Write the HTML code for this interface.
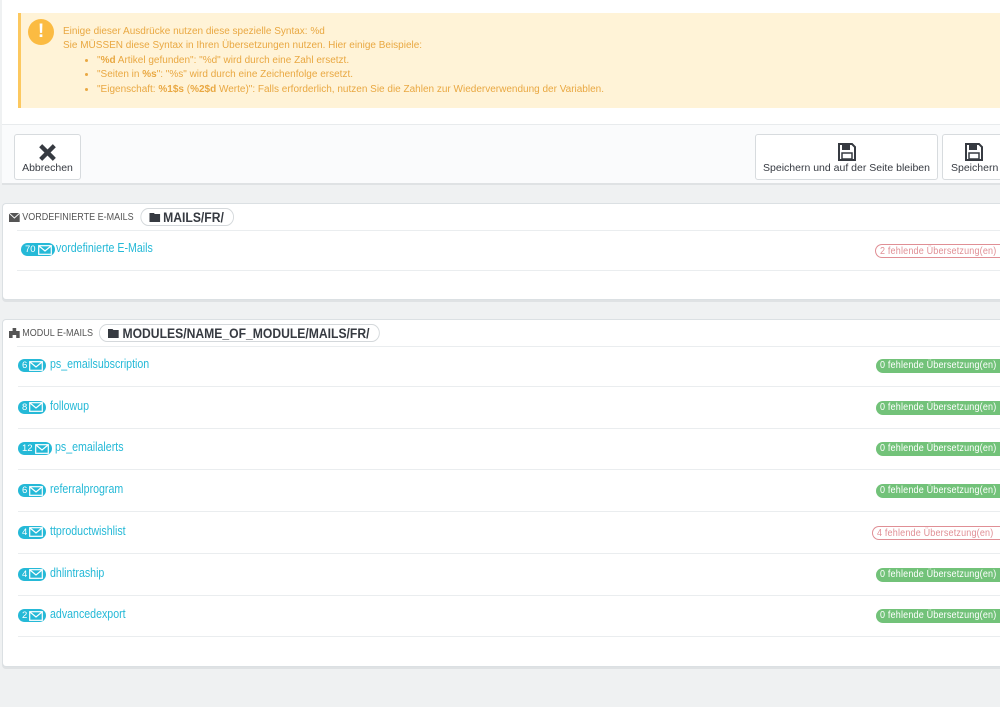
<!DOCTYPE html>
<html><head><meta charset="utf-8"><style>
*{margin:0;padding:0;box-sizing:border-box}
body{width:1000px;height:707px;background:#eff1f2;font-family:"Liberation Sans",sans-serif;position:relative;overflow:hidden}
.abs{position:absolute}
.top{left:2px;top:0;width:998px;height:124px;background:#fff}
.alert{left:18px;top:13px;width:982px;height:95px;background:#fff3d7;border-left:3px solid #fcc85f;color:#e9a842;font-size:10px;line-height:14.4px}
.alert .ic{position:absolute;left:7px;top:6px;width:26px;height:26px;border-radius:50%;background:#fbbb42;color:#fff;font-weight:bold;font-size:19px;text-align:center;line-height:26px}
.alert .tx{position:absolute;left:42px;top:12px}
.alert ul{margin-left:34px;list-style:disc}
.tool{left:2px;top:124px;width:998px;height:61px;background:#fafbfc;border-top:1px solid #e8ebed;border-bottom:2px solid #dfe2e4}
.btn{position:absolute;top:9px;height:46px;background:#fff;border:1px solid #d7dbde;border-radius:3px;color:#363a41;font-size:10.5px;text-align:center}
.btn .lb{position:absolute;bottom:5px;left:0;right:0}
.panel{left:2px;width:998px;background:#fff;border:1px solid #dbe0e3;border-right:none;border-radius:4px 0 0 4px;box-shadow:0 2px 0 #dfe2e4}
.ph{position:absolute;left:6px;top:3px;height:20px;font-size:10px;color:#555;display:flex;align-items:center;transform:scaleX(.9);transform-origin:left}
.path{margin-left:7px;border:1px solid #d4d8db;border-radius:10px;padding:0 10px 0 9px;height:18px;display:flex;align-items:center;font-weight:bold;font-size:13.5px;color:#363a41}
.hl{position:absolute;left:14px;right:0;height:1px;background:#eaedef}
.row{position:absolute;left:16px;width:984px;height:14px}
.bd{position:absolute;left:2px;top:0;height:13px;background:#25b9d7;border-radius:7px;color:#fff;font-size:9.5px;line-height:13px;padding-left:4px;display:flex;align-items:center}
.bd svg{margin-left:2px;margin-right:3px}
.lk{position:absolute;top:-2px;color:#25b9d7;font-size:12.5px;transform:scaleX(.85);transform-origin:left;white-space:nowrap}
.mis{position:absolute;right:0;top:0;height:14px;width:128px;border-radius:7px 0 0 7px;font-size:10.5px;line-height:13px;padding-left:4px;white-space:nowrap;letter-spacing:.2px}
.mis span{display:inline-block;transform:scaleX(.86);transform-origin:left}
.g{background:#72c279;color:#fff}
.r{border:1.5px solid #e08f95;border-right:none;color:#e08f95;background:#fff}
</style></head><body>
<div class="abs top"></div>
<div class="abs alert"><div class="ic">!</div><div class="tx">
Einige dieser Ausdrücke nutzen diese spezielle Syntax: %d<br>Sie MÜSSEN diese Syntax in Ihren Übersetzungen nutzen. Hier einige Beispiele:
<ul><li>"<b>%d</b> Artikel gefunden": "%d" wird durch eine Zahl ersetzt.</li><li>"Seiten in <b>%s</b>": "%s" wird durch eine Zeichenfolge ersetzt.</li><li>"Eigenschaft: <b>%1$s</b> (<b>%2$d</b> Werte)": Falls erforderlich, nutzen Sie die Zahlen zur Wiederverwendung der Variablen.</li></ul></div></div>
<div class="abs tool">
<div class="btn" style="left:12px;width:67px"><svg style="position:absolute;left:24px;top:9px" width="17" height="17" viewBox="0 0 16 16"><path d="M3 3L13 13M13 3L3 13" stroke="#363a41" stroke-width="4" stroke-linecap="square"/></svg><div class="lb">Abbrechen</div></div>
<div class="btn" style="left:753px;width:183px"><svg style="position:absolute;left:81px;top:7px" width="20" height="20" viewBox="0 0 20 20"><path d="M2 2H15L18 5V18H2Z" fill="none" stroke="#363a41" stroke-width="2"/><rect x="5" y="3" width="8" height="5" fill="#363a41"/><rect x="5" y="11" width="10" height="6" fill="none" stroke="#363a41" stroke-width="1.5"/></svg><div class="lb">Speichern und auf der Seite bleiben</div></div>
<div class="btn" style="left:940px;width:70px"><svg style="position:absolute;left:21px;top:7px" width="20" height="20" viewBox="0 0 20 20"><path d="M2 2H15L18 5V18H2Z" fill="none" stroke="#363a41" stroke-width="2"/><rect x="5" y="3" width="8" height="5" fill="#363a41"/><rect x="5" y="11" width="10" height="6" fill="none" stroke="#363a41" stroke-width="1.5"/></svg><div class="lb" style="text-align:left;padding-left:8px">Speichern</div></div>
</div>

<div class="abs panel" style="top:203px;height:97px">
<div class="ph"><svg width="12" height="9" viewBox="0 0 12 9"><rect width="12" height="9" fill="#555"/><path d="M0 0L6 5L12 0" stroke="#fff" fill="none"/></svg>&nbsp;VORDEFINIERTE E-MAILS<div class="path"><svg width="12" height="10" viewBox="0 0 12 10"><path d="M0 1H5L6 2H12V10H0Z" fill="#363a41"/></svg>&nbsp;MAILS/FR/</div></div>
<div class="hl" style="top:26px"></div>
<div class="row" style="top:39px"><div class="bd">70<svg width="14" height="10" viewBox="0 0 14 10"><rect x=".7" y=".7" width="12.6" height="8.6" fill="none" stroke="#fff" stroke-width="1.2"/><path d="M1 1L7 6L13 1" stroke="#fff" fill="none" stroke-width="1.2"/></svg></div><div class="lk" style="left:37px">vordefinierte E-Mails</div><div class="mis r" style="top:1px"><span>2 fehlende Übersetzung(en)</span></div></div>
<div class="hl" style="top:66px"></div>
</div>

<div class="abs panel" style="top:319px;height:348px">
<div class="ph"><svg width="12" height="10" viewBox="0 0 12 10"><path d="M4 0H8V3H12V10H8V7H4V10H0V3H4Z" fill="#555"/></svg>&nbsp;MODUL E-MAILS<div class="path"><svg width="12" height="10" viewBox="0 0 12 10"><path d="M0 1H5L6 2H12V10H0Z" fill="#363a41"/></svg>&nbsp;MODULES/NAME_OF_MODULE/MAILS/FR/</div></div>
<div class="hl" style="top:26px"></div>
</div>
<div id="rows"></div>
<script>
var d=[["6","ps_emailsubscription",0],["8","followup",0],["12","ps_emailalerts",0],["6","referralprogram",0],["4","ttproductwishlist",4],["4","dhlintraship",0],["2","advancedexport",0]];
var h="";d.forEach(function(r,i){var y=359+i*41.7;var w=r[0].length>1?36:31;
h+='<div class="row" style="position:absolute;top:'+y+'px"><div class="bd">'+r[0]+'<svg width="14" height="10" viewBox="0 0 14 10"><rect x=".7" y=".7" width="12.6" height="8.6" fill="none" stroke="#fff" stroke-width="1.2"/><path d="M1 1L7 6L13 1" stroke="#fff" fill="none" stroke-width="1.2"/></svg></div><div class="lk" style="left:'+(w+3)+'px">'+r[1]+'</div><div class="mis '+(r[2]?'r':'g')+'" style="width:'+(r[2]?128:124)+'px"><span>'+r[2]+' fehlende Übersetzung(en)</span></div></div>';
h+='<div style="position:absolute;left:18px;right:0;height:1px;background:#eaedef;top:'+(y+27)+'px"></div>';});
document.getElementById("rows").innerHTML=h;
</script>
</body></html>
